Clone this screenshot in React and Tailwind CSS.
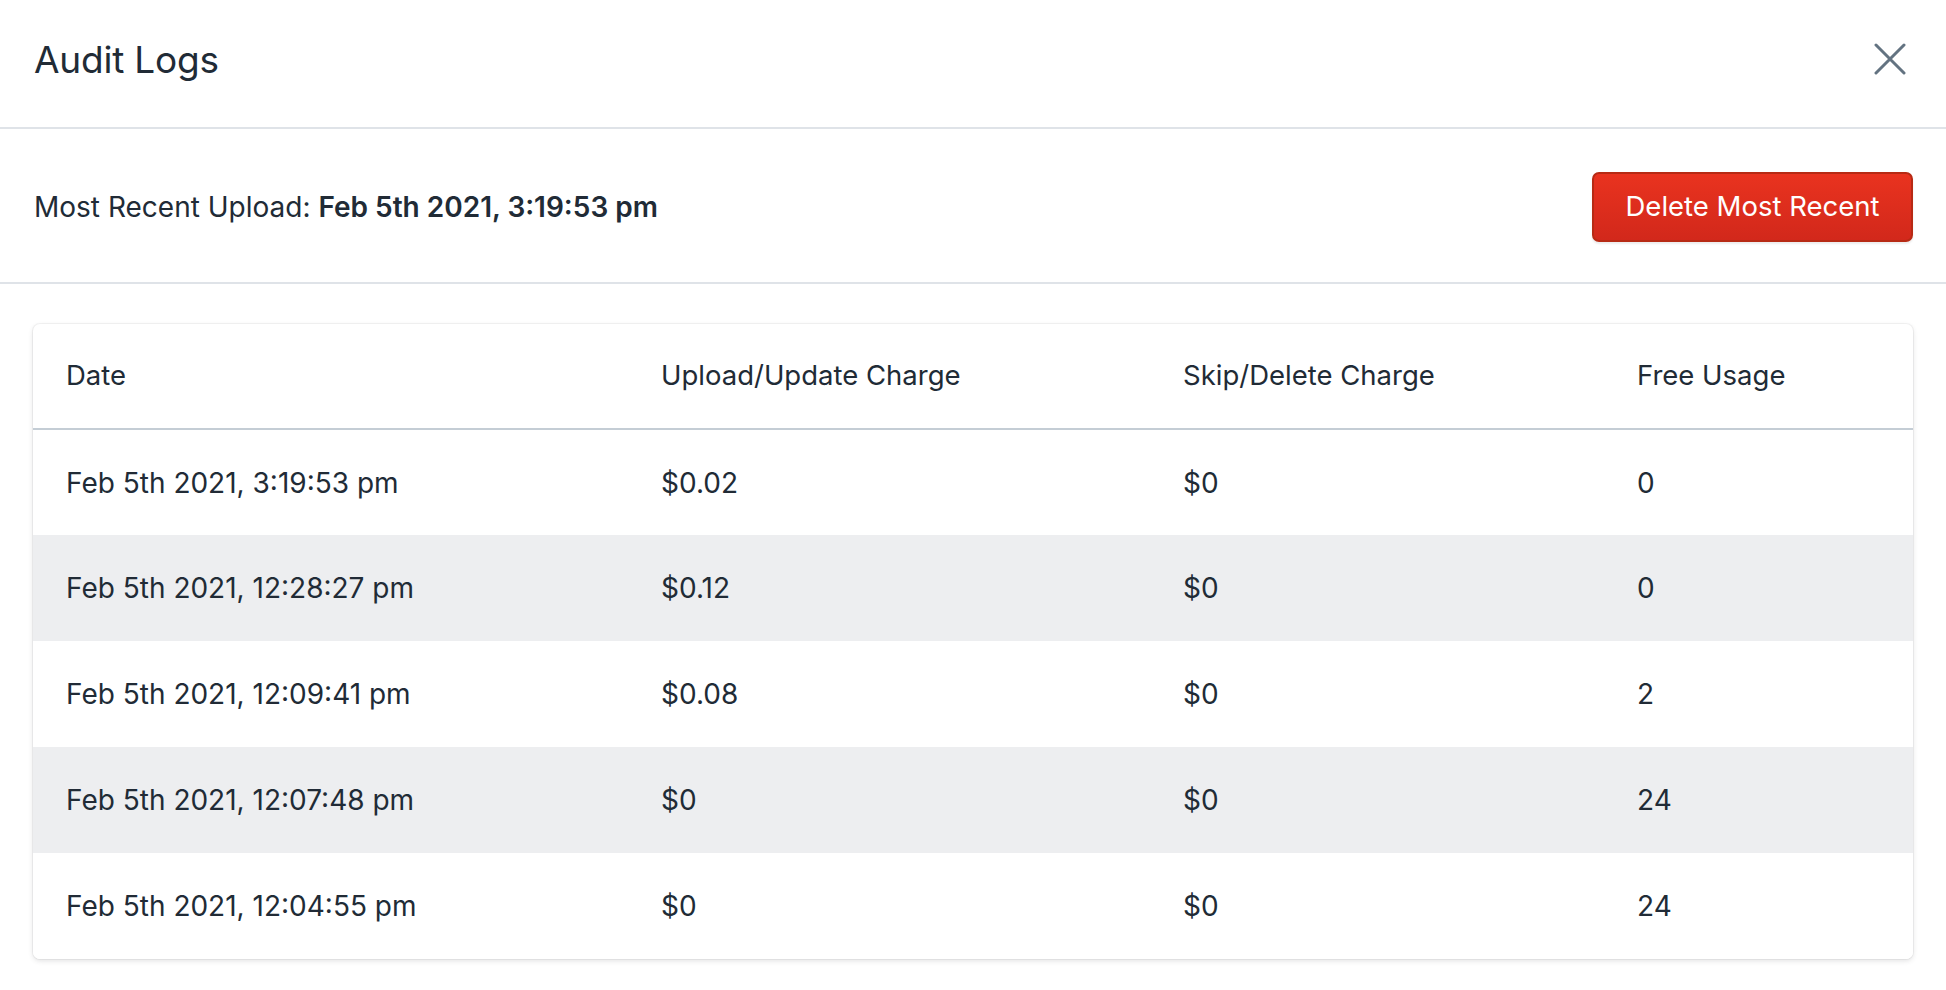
import React from 'react';

const rows = [
  { date: 'Feb 5th 2021, 3:19:53 pm', upload: '$0.02', skip: '$0', free: '0' },
  { date: 'Feb 5th 2021, 12:28:27 pm', upload: '$0.12', skip: '$0', free: '0' },
  { date: 'Feb 5th 2021, 12:09:41 pm', upload: '$0.08', skip: '$0', free: '2' },
  { date: 'Feb 5th 2021, 12:07:48 pm', upload: '$0', skip: '$0', free: '24' },
  { date: 'Feb 5th 2021, 12:04:55 pm', upload: '$0', skip: '$0', free: '24' },
];

const headers = ['Date', 'Upload/Update Charge', 'Skip/Delete Charge', 'Free Usage'];

const CloseIcon = () => (
  <svg width="32" height="32" viewBox="0 0 32 32" fill="none">
    <path d="M2 2L30 30M30 2L2 30" stroke="#637381" strokeWidth="3" strokeLinecap="round" />
  </svg>
);

const App = () => {
  return (
    <div className="min-h-screen bg-white font-['Inter',sans-serif] text-[#212b36]">
      {/* Modal header */}
      <div className="flex items-center justify-between h-[129px] pb-[9px] pl-[34px] pr-[40px] border-b-2 border-[#dfe3e8]">
        <h1 className="text-[37px] leading-none font-normal tracking-[-0.2px]">Audit Logs</h1>
        <button className="flex items-center justify-center">
          <CloseIcon />
        </button>
      </div>

      {/* Most recent upload */}
      <div className="flex items-center justify-between h-[155px] pt-[3px] pl-[34px] pr-[33px] border-b-2 border-[#dfe3e8]">
        <p className="text-[28px] leading-none">
          Most Recent Upload: <span className="font-semibold">Feb 5th 2021, 3:19:53 pm</span>
        </p>
        <button className="w-[321px] h-[70px] rounded-[7px] border-2 border-[#b72a14] bg-gradient-to-b from-[#e9331f] to-[#d2281b] text-white text-[27.5px] leading-none shadow-[0_2px_2px_rgba(0,0,0,0.08)]">
          Delete Most Recent
        </button>
      </div>

      {/* Table card */}
      <div className="mx-[33px] mt-[40px] mb-[31px] rounded-[7px] bg-white overflow-hidden shadow-[0_0_0_1px_rgba(63,63,68,0.06),0_2px_5px_0_rgba(63,63,68,0.15)]">
        <table className="w-full table-fixed text-[28px]">
          <colgroup>
            <col className="w-[595px]" />
            <col className="w-[522px]" />
            <col className="w-[454px]" />
            <col />
          </colgroup>
          <thead>
            <tr className="border-b-2 border-[#c4cdd5]">
              {headers.map(h => (
                <th key={h} className="h-[105px] px-[33px] text-left text-[27.5px] font-normal align-middle">
                  {h}
                </th>
              ))}
            </tr>
          </thead>
          <tbody>
            {rows.map((r, i) => (
              <tr key={i} className={i % 2 === 1 ? 'bg-[#edeef0]' : 'bg-white'}>
                <td className="h-[106px] px-[33px] align-middle">{r.date}</td>
                <td className="h-[106px] px-[33px] align-middle">{r.upload}</td>
                <td className="h-[106px] px-[33px] align-middle">{r.skip}</td>
                <td className="h-[106px] px-[33px] align-middle">{r.free}</td>
              </tr>
            ))}
          </tbody>
        </table>
      </div>
    </div>
  );
};

export default App;
